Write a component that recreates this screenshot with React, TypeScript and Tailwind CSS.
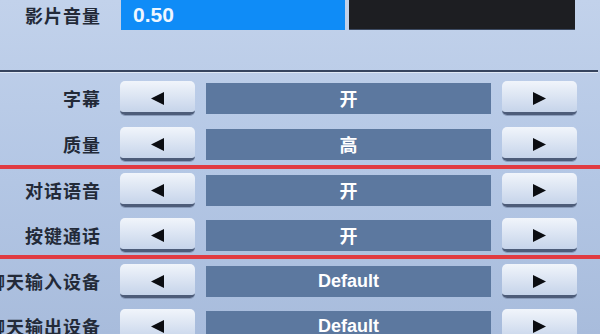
import React from "react";

type Row = { label: string; value: string; latin?: boolean };

const topRows: Row[] = [
  { label: "字幕", value: "开" },
  { label: "质量", value: "高" },
];

const voiceRows: Row[] = [
  { label: "对话语音", value: "开" },
  { label: "按键通话", value: "开" },
];

const deviceRows: Row[] = [
  { label: "聊天输入设备", value: "Default", latin: true },
  { label: "聊天输出设备", value: "Default", latin: true },
];

const cjk = "font-['Noto_Sans_CJK_SC',sans-serif]";

function Arrow({ dir }: { dir: "left" | "right" }) {
  return (
    <svg width="13" height="13" viewBox="0 0 13 13" className="mt-[3px]">
      {dir === "left" ? (
        <polygon points="0,6.5 13,0 13,13" fill="#0b0d12" />
      ) : (
        <polygon points="13,6.5 0,0 0,13" fill="#0b0d12" />
      )}
    </svg>
  );
}

function ArrowButton({ dir }: { dir: "left" | "right" }) {
  return (
    <button className="flex h-[34px] w-[75px] shrink-0 items-center justify-center rounded-[5px] border-b-[3px] border-[#4d5c79] bg-gradient-to-b from-[#f1f5fb] to-[#c6d4ea] shadow-[0_1px_0_#8a9cbb]">
      <Arrow dir={dir} />
    </button>
  );
}

function SettingRow({ row }: { row: Row }) {
  return (
    <div className="flex h-[34px] items-center">
      <div className="flex w-[120px] shrink-0 justify-end pr-[19px]">
        <span className={`${cjk} whitespace-nowrap text-[18px] font-bold tracking-[1px] text-[#232a38]`}>
          {row.label}
        </span>
      </div>
      <ArrowButton dir="left" />
      <div className="mx-[11px] flex h-[31px] w-[285px] shrink-0 items-center justify-center bg-[#5c789f]">
        {row.latin ? (
          <span className="font-['Liberation_Sans',sans-serif] text-[18px] font-bold text-white">
            {row.value}
          </span>
        ) : (
          <span className={`${cjk} text-[18px] font-bold text-white`}>{row.value}</span>
        )}
      </div>
      <ArrowButton dir="right" />
    </div>
  );
}

export default function App() {
  return (
    <div className="h-[334px] w-[600px] overflow-hidden bg-gradient-to-b from-[#c2d2eb] via-[#b4c7e5] to-[#a8bcdc]">
      {/* volume row */}
      <div className="flex h-[30px] items-center">
        <div className="flex w-[121px] shrink-0 justify-end pr-[20px]">
          <span className={`${cjk} text-[18px] font-bold tracking-[1px] text-[#232a38]`}>影片音量</span>
        </div>
        <div className="flex h-full w-[224px] items-center bg-[#0f8cf7] pl-[12px]">
          <span className="font-['Liberation_Sans',sans-serif] text-[21px] font-bold text-[#eef6ff]">0.50</span>
        </div>
        <div className="ml-[4px] h-full w-[226px] border-b border-[#3c4a62] bg-[#1d1e22]" />
      </div>

      <div className="mt-[40px] w-[598px]">
        <div className="h-[2px] bg-[#36445e]" />
        <div className="h-px bg-[#dfe8f5]" />
      </div>

      <div className="mt-[8px] flex flex-col gap-[12px]">
        {topRows.map((r) => (
          <SettingRow key={r.label} row={r} />
        ))}
      </div>

      <div className="mt-[4px] flex flex-col gap-[11px] border-y-4 border-[#e03b42] pb-[3px] pt-[4px]">
        {voiceRows.map((r) => (
          <SettingRow key={r.label} row={r} />
        ))}
      </div>

      <div className="mt-[5px] flex flex-col gap-[11px]">
        {deviceRows.map((r) => (
          <SettingRow key={r.label} row={r} />
        ))}
      </div>
    </div>
  );
}
